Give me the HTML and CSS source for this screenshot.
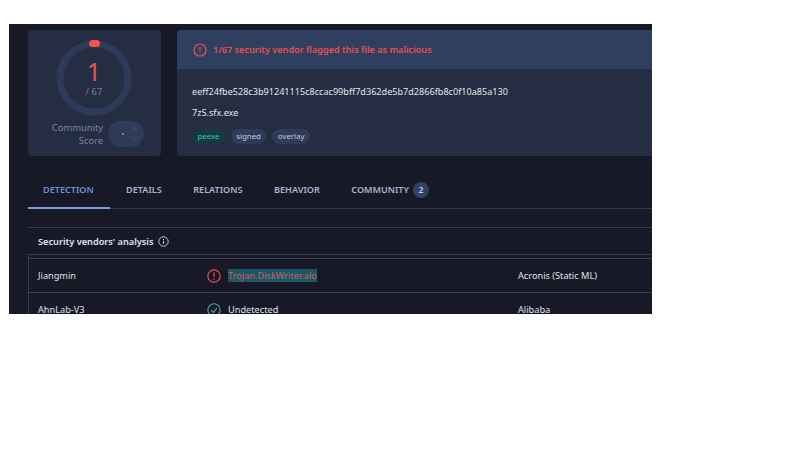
FILE: index.html
```html
<!DOCTYPE html>
<html lang="en">
<head>
<meta charset="utf-8">
<title>7zS.sfx.exe</title>
<link rel="stylesheet" href="styles.css">
</head>
<body>
<main class="shot">
  <section class="cards">
    <div class="score">
      <div class="ring">
        <svg class="ring-svg" width="76" height="76" viewBox="0 0 76 76"><circle cx="38" cy="38" r="34" fill="none" stroke="#2d3b58" stroke-width="7"/><rect x="33" y="0" width="11" height="7" rx="3.5" fill="#f0524f"/></svg>
        <div class="ring-num">1</div>
        <div class="ring-total">/ 67</div>
      </div>
      <div class="community">
        <div class="community-label">Community<br>Score</div>
        <div class="community-pill">
          <span class="dot"></span>
          <svg class="arrows" width="8" height="20" viewBox="0 0 8 20"><path d="M1 7l3-3 3 3" fill="none" stroke="#3b4a6b" stroke-width="1.6"/><path d="M1 13l3 3 3-3" fill="none" stroke="#3b4a6b" stroke-width="1.6"/></svg>
        </div>
      </div>
    </div>
    <div class="info">
      <div class="banner">
        <svg class="i" width="14" height="14" viewBox="0 0 14 14"><circle cx="7" cy="7" r="6" fill="none" stroke="#e9504f" stroke-width="1.2"/><path d="M7 3.6v4.2M7 9.4v1.2" stroke="#e9504f" stroke-width="1.3"/></svg>
        <span>1/67 security vendor flagged this file as malicious</span>
      </div>
      <div class="info-body">
        <div class="hash">eeff24fbe528c3b91241115c8ccac99bff7d362de5b7d2866fb8c0f10a85a130</div>
        <div class="fname">7zS.sfx.exe</div>
        <div class="tags"><span class="tag tag-green">peexe</span><span class="tag">signed</span><span class="tag">overlay</span></div>
      </div>
    </div>
  </section>
  <nav class="tabs">
    <span class="tab active">DETECTION</span>
    <span class="tab">DETAILS</span>
    <span class="tab">RELATIONS</span>
    <span class="tab">BEHAVIOR</span>
    <span class="tab">COMMUNITY<b class="count">2</b></span>
  </nav>
  <section class="analysis">
    <div class="analysis-head">
      <span>Security vendors' analysis</span>
      <svg width="11" height="11" viewBox="0 0 11 11"><circle cx="5.5" cy="5.5" r="4.7" fill="none" stroke="#d5d9e3" stroke-width=".9"/><path d="M5.5 4.8v3M5.5 3v1" stroke="#d5d9e3"/></svg>
    </div>
    <div class="row">
      <div class="vendor">Jiangmin</div>
      <div class="result">
        <svg width="14" height="14" viewBox="0 0 14 14"><circle cx="7" cy="7" r="6.2" fill="none" stroke="#e9504f" stroke-width="1.2"/><path d="M7 3.4v4.4M7 9.4v1.3" stroke="#e9504f" stroke-width="1.3"/></svg>
        <span class="bad">Trojan.DiskWriter.alo</span>
      </div>
      <div class="vendor">Acronis (Static ML)</div>
    </div>
    <div class="row">
      <div class="vendor">AhnLab-V3</div>
      <div class="result">
        <svg width="14" height="14" viewBox="0 0 14 14"><circle cx="7" cy="7" r="6.2" fill="none" stroke="#4fa79a" stroke-width="1.1"/><path d="M4 7.2l2.2 2.2L10 5.2" fill="none" stroke="#4fa79a" stroke-width="1.1"/></svg>
        <span>Undetected</span>
      </div>
      <div class="vendor">Alibaba</div>
    </div>
  </section>
</main>
</body>
</html>
```
FILE: styles.css
```css
html, body { margin: 0; padding: 0; background: #fff; }
body { padding: 24px 0 0 9px; font-family: "Noto Sans", sans-serif; }
.shot {
  width: 643px;
  height: 290px;
  overflow: hidden;
  background: #181926;
  padding: 6px 0 0 19px;
  box-sizing: border-box;
  color: #dfe3ec;
}
.cards { display: flex; gap: 16px; height: 126px; }
.score {
  flex: 0 0 133px;
  background: #242d42;
  border-radius: 4px;
  display: flex;
  flex-direction: column;
  align-items: center;
  padding-top: 10px;
  box-sizing: border-box;
}
.ring { position: relative; width: 76px; height: 76px; margin-left: -1px; }
.ring-svg { display: block; }
.ring-num {
  position: absolute; left: 0; right: 0; top: 15px;
  text-align: center; font-size: 25px; line-height: 32px; color: #f0524f;
}
.ring-total {
  position: absolute; left: 0; right: 0; top: 45px;
  text-align: center; font-size: 9.5px; line-height: 14px; color: #77829c;
}
.community { display: flex; align-items: center; gap: 5px; margin: 5px 0 0 7px; }
.community-label { font-size: 9.4px; line-height: 13px; text-align: right; color: #7a86a1; }
.community-pill {
  width: 36px; height: 26px; border-radius: 13px; background: #2f3b58;
  display: flex; align-items: center; justify-content: flex-end; gap: 7px;
  padding-right: 5px; box-sizing: border-box;
}
.dot { width: 2px; height: 2px; background: #8c97ae; border-radius: 50%; }
.info { flex: 1; background: #242d42; border-radius: 4px 0 0 4px; overflow: hidden; }
.banner {
  height: 39px; background: #2f3f5f;
  display: flex; align-items: center; gap: 6px; padding-left: 16px;
  color: #e9504f; font-size: 9.1px; font-weight: 600;
}
.i { flex: none; }
.info-body { padding: 16px 0 0 15px; }
.hash { font-size: 9.1px; line-height: 14px; color: #e3e6ee; white-space: nowrap; }
.fname { font-size: 9.1px; line-height: 14px; margin-top: 7px; color: #e3e6ee; }
.tags { display: flex; gap: 6px; margin-top: 9px; }
.tag {
  font-size: 7.8px; line-height: 14px; height: 15px; padding: 0 5.5px; border-radius: 7.5px;
  background: #2f3b58; color: #c6ccdb;
}
.tag-green { background: #143a42; color: #34c9a0; }
.tabs {
  display: flex; height: 53px;
  border-bottom: 1px solid #353a52; box-sizing: border-box; align-items: stretch;
}
.tab {
  display: flex; align-items: center; font-size: 9.1px; font-weight: 600;
  padding: 16px 15.5px 0 16px; color: #a9b6d0; box-sizing: border-box;
  border-bottom: 2px solid transparent; margin-bottom: -1px;
}
.tab.active { color: #6d8fd6; border-bottom-color: #7b9be0; width: 82px; padding-left: 15px; }
.count {
  display: inline-block; width: 16px; height: 16px; line-height: 16px; border-radius: 50%;
  margin-left: 4px; background: #2f4266; color: #c5d0e5; text-align: center; font-size: 8.5px; font-weight: 600;
}
.analysis { margin-top: 18px; border-left: 1px solid #353a52; }
.analysis-head {
  display: flex; align-items: center; gap: 5px;
  height: 28px; border-top: 1px solid #353a52;
  padding-left: 10px; font-size: 9.2px; font-weight: 600; color: #e3e6ee;
  margin-left: -1px; box-sizing: border-box; background: #181926;
  border-bottom: 1px solid #353a52;
}
.row {
  display: grid; grid-template-columns: 169px 311px 1fr; height: 34px; align-items: center;
  border-top: 1px solid #3a3f57; font-size: 9.2px; padding-left: 9px; box-sizing: border-box;
}
.analysis-head + .row { margin-top: 3px; }
.result { display: flex; align-items: center; gap: 7px; }
.bad { background: #1c5766; color: #c9606a; }
```
